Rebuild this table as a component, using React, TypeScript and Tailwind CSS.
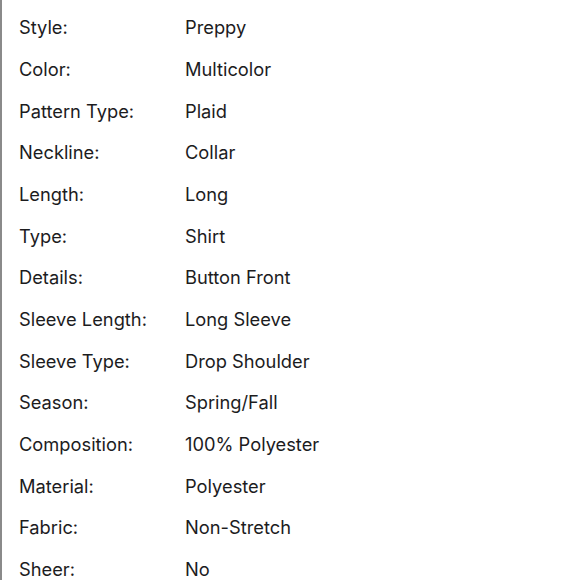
import React from "react";

const rows: [string, string][] = [
  ["Style:", "Preppy"],
  ["Color:", "Multicolor"],
  ["Pattern Type:", "Plaid"],
  ["Neckline:", "Collar"],
  ["Length:", "Long"],
  ["Type:", "Shirt"],
  ["Details:", "Button Front"],
  ["Sleeve Length:", "Long Sleeve"],
  ["Sleeve Type:", "Drop Shoulder"],
  ["Season:", "Spring/Fall"],
  ["Composition:", "100% Polyester"],
  ["Material:", "Polyester"],
  ["Fabric:", "Non-Stretch"],
  ["Sheer:", "No"],
];

const App = () => {
  return (
    <div className="w-[580px] h-[580px] overflow-hidden bg-white border-l-2 border-[#8a8a8a]">
      <div className="pt-[7px] pl-[17px] font-['Inter',sans-serif] text-[18.3px] text-[#1c1c1e]">
        {rows.map(([label, value]) => (
          <div key={label} className="flex items-center h-[41.7px]">
            <span className="w-[166px]">{label}</span>
            <span>{value}</span>
          </div>
        ))}
      </div>
    </div>
  );
};

export default App;
